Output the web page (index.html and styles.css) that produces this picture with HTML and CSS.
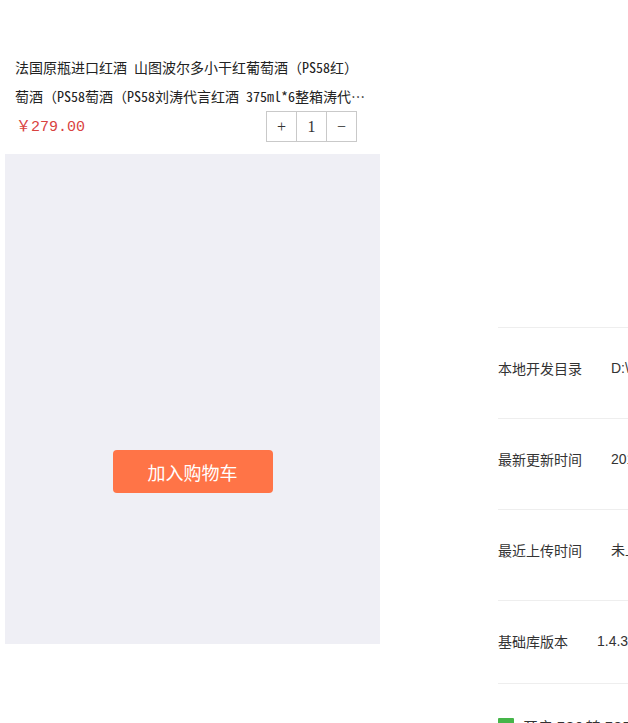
FILE: index.html
```html
<!DOCTYPE html>
<html lang="zh-CN">
<head>
<meta charset="utf-8">
<title>商品</title>
<link rel="stylesheet" href="styles.css">
</head>
<body>
<div class="page">
  <div class="left">
    <div class="title">
      <div class="line">法国原瓶进口红酒 山图波尔多小干红葡萄酒（PS58红）</div>
      <div class="line clip">萄酒（PS58萄酒（PS58刘涛代言红酒 375ml*6整箱涛代言红酒 375ml*6整箱</div>
    </div>
    <div class="price-row">
      <span class="price"><span class="yen">￥</span>279.00</span>
      <div class="stepper">
        <span class="cell">+</span>
        <span class="cell">1</span>
        <span class="cell">−</span>
      </div>
    </div>
    <div class="panel">
      <button class="cart-btn">加入购物车</button>
    </div>
  </div>
  <div class="right">
    <div class="row"><span class="label">本地开发目录</span><span class="value">D:\WeChatProjects\wine-shop</span></div>
    <div class="row"><span class="label">最新更新时间</span><span class="value">2017-08-16 10:24:35</span></div>
    <div class="row"><span class="label">最近上传时间</span><span class="value">未上传</span></div>
    <div class="row last"><span class="label">基础库版本</span><span class="value">1.4.3</span></div>
    <div class="check-row"><span class="checkbox"></span><span class="check-text">开启 ES6 转 ES5</span></div>
  </div>
</div>
</body>
</html>
```

FILE: styles.css
```css
html, body {
  margin: 0;
  padding: 0;
  background: #fff;
  overflow: hidden;
}
.page {
  display: flex;
  width: 900px;
  height: 723px;
}
.left {
  width: 375px;
  margin-left: 5px;
  flex: none;
}
.title {
  padding: 53px 15px 0 10px;
  font-family: "Noto Sans Mono CJK SC", "Liberation Mono", "Noto Sans CJK SC", monospace;
  font-size: 14px;
  line-height: 29px;
  color: #222;
}
.line {
  white-space: nowrap;
}
.clip {
  overflow: hidden;
  text-overflow: ellipsis;
}
.price-row {
  display: flex;
  justify-content: space-between;
  align-items: center;
  height: 31px;
  padding: 0 23px 0 11px;
}
.price {
  font-family: "Liberation Mono", monospace;
  font-size: 15px;
  color: #d9423f;
  padding-bottom: 4px;
}
.yen {
  font-family: "Noto Sans CJK SC", sans-serif;
  font-size: 15px;
}
.stepper {
  display: flex;
  border: 1px solid #c9c9c9;
  height: 29px;
}
.cell {
  width: 29px;
  display: flex;
  align-items: center;
  justify-content: center;
  font-family: "Liberation Serif", serif;
  font-size: 16px;
  color: #333;
}
.cell + .cell {
  border-left: 1px solid #c9c9c9;
}
.panel {
  margin-top: 12px;
  height: 490px;
  background: #efeff5;
  display: flex;
  flex-direction: column;
  align-items: center;
  padding-top: 296px;
  box-sizing: border-box;
}
.cart-btn {
  width: 160px;
  height: 43px;
  border: none;
  border-radius: 4px;
  background: #ff7447;
  color: #fff;
  font-family: "Noto Sans CJK SC", sans-serif;
  font-size: 18px;
  padding: 0;
}
.right {
  margin-left: 118px;
  padding-top: 327px;
  width: 400px;
  flex: none;
  font-family: "Noto Sans CJK SC", sans-serif;
  font-size: 14px;
  color: #333;
}
.row {
  border-top: 1px solid #eeeeee;
  padding: 30px 0 40px;
  line-height: 20px;
  display: flex;
  white-space: nowrap;
}
.row.last {
  padding-bottom: 32px;
}
.value {
  margin-left: 29px;
  font-family: "Liberation Sans", "Noto Sans CJK SC", sans-serif;
}
.check-row {
  border-top: 1px solid #eeeeee;
  padding-top: 33px;
  display: flex;
  align-items: flex-start;
  line-height: 20px;
}
.checkbox {
  width: 16px;
  height: 16px;
  background: #45b549;
  border-radius: 1px;
  margin-top: 1px;
}
.check-text {
  margin-left: 9px;
  font-size: 15px;
}
```
